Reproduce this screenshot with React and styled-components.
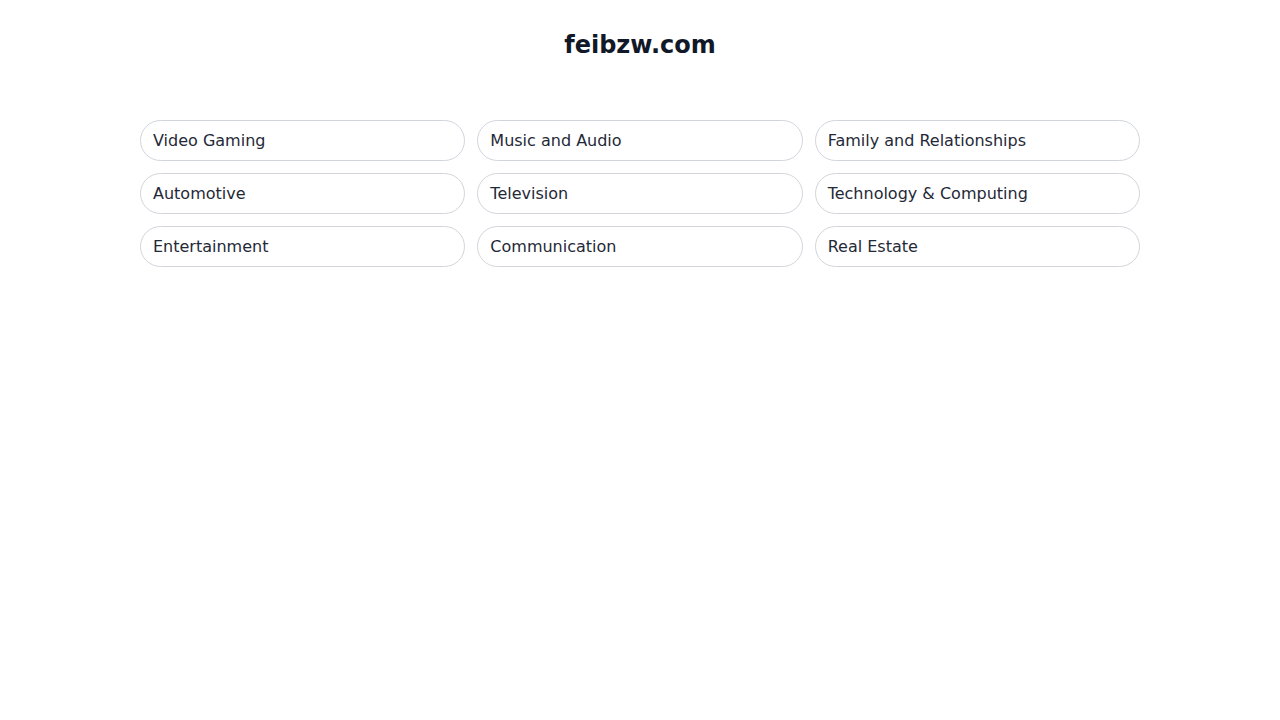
import React from 'react';
import styled, { createGlobalStyle } from 'styled-components';

const GlobalStyle = createGlobalStyle`
  body {
    margin: 0;
    background: #ffffff;
    font-family: 'DejaVu Sans', 'Liberation Sans', sans-serif;
  }
`;

const Page = styled.main`
  padding-top: 29px;
`;

const Title = styled.h1`
  margin: 0 0 59px;
  font-size: 24px;
  line-height: 32px;
  font-weight: 700;
  color: #111827;
  text-align: center;
`;

const Grid = styled.div`
  width: 1000px;
  margin: 0 auto;
  display: grid;
  grid-template-columns: repeat(3, 1fr);
  gap: 12px;
`;

const Item = styled.a`
  display: block;
  padding: 8px 12px;
  border: 1px solid #d1d5db;
  border-radius: 9999px;
  font-size: 16px;
  line-height: 23px;
  color: #1f2937;
  text-decoration: none;
`;

const categories = [
  'Video Gaming',
  'Music and Audio',
  'Family and Relationships',
  'Automotive',
  'Television',
  'Technology & Computing',
  'Entertainment',
  'Communication',
  'Real Estate',
];

const App = () => {
  return (
    <Page>
      <GlobalStyle />
      <Title>feibzw.com</Title>
      <Grid>
        {categories.map((c) => (
          <Item key={c} href='#'>
            {c}
          </Item>
        ))}
      </Grid>
    </Page>
  );
};

export default App;
